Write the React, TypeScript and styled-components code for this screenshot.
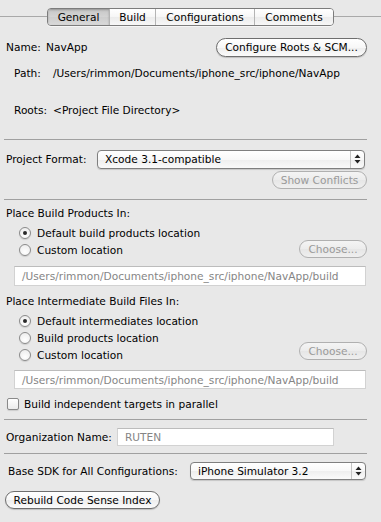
import styled, { createGlobalStyle } from "styled-components";

const Global = createGlobalStyle`
  html, body { margin: 0; padding: 0; background: #e8e8e8; }
  body {
    font-family: "DejaVu Sans", "Liberation Sans", sans-serif;
    font-size: 10.6px;
    color: #000;
  }
  * { box-sizing: border-box; }
`;

const Panel = styled.div`
  width: 381px;
  height: 522px;
  background: #e8e8e8;
  display: flex;
  flex-direction: column;
  overflow: hidden;
`;

const TabBar = styled.div`
  height: 35px;
  padding-top: 8px;
  display: flex;
  align-items: flex-start;
`;

const TabLine = styled.div<{ $w?: number }>`
  ${({ $w }) => ($w ? `width: ${$w}px;` : "flex: 1;")}
  height: 1px;
  margin-top: 8px;
  background: #a9a9a9;
`;

const Segments = styled.div`
  display: flex;
  height: 18px;
  border: 1px solid #7c7c7c;
  border-radius: 4px;
  overflow: hidden;
  box-shadow: 0 1px 0 rgba(255, 255, 255, 0.6);
`;

const Tab = styled.div<{ $w: number; $on?: boolean }>`
  width: ${({ $w }) => $w}px;
  display: flex;
  align-items: center;
  justify-content: center;
  font-size: 10.6px;
  color: #000;
  & + & { border-left: 1px solid #b4b4b4; }
  background: ${({ $on }) =>
    $on
      ? "linear-gradient(#c6c6c6, #d4d4d4 50%, #cdcdcd 51%, #d9d9d9)"
      : "linear-gradient(#ffffff, #f6f6f6 50%, #ececec 51%, #f7f7f7)"};
  box-shadow: ${({ $on }) => ($on ? "inset 0 1px 2px rgba(0,0,0,0.25)" : "none")};
`;

const Row = styled.div<{ $h: number; $mt?: number; $pl?: number; $pr?: number }>`
  height: ${({ $h }) => $h}px;
  margin-top: ${({ $mt }) => $mt ?? 0}px;
  padding-left: ${({ $pl }) => $pl ?? 0}px;
  padding-right: ${({ $pr }) => $pr ?? 0}px;
  display: flex;
  align-items: center;
  white-space: nowrap;
`;

const Label = styled.span<{ $w?: number }>`
  ${({ $w }) => ($w ? `width: ${$w}px; flex: none;` : "")}
  color: #000;
`;

const Spacer = styled.div`
  flex: 1;
`;

const Separator = styled.div<{ $mt: number }>`
  height: 1px;
  margin: ${({ $mt }) => $mt}px 14px 0 4px;
  background: #a0a0a0;
  flex: none;
`;

const Pill = styled.div<{ $w: number; $h?: number; $off?: boolean }>`
  width: ${({ $w }) => $w}px;
  height: ${({ $h }) => $h ?? 19}px;
  flex: none;
  border: 1px solid ${({ $off }) => ($off ? "#b0b0b0" : "#6e6e6e")};
  border-radius: 10px;
  display: flex;
  align-items: center;
  justify-content: center;
  color: ${({ $off }) => ($off ? "#9a9a9a" : "#000")};
  background: ${({ $off }) =>
    $off
      ? "linear-gradient(#f4f4f4, #ececec 50%, #e6e6e6 51%, #efefef)"
      : "linear-gradient(#ffffff, #f7f7f7 50%, #ededed 51%, #fbfbfb)"};
  box-shadow: ${({ $off }) => ($off ? "none" : "0 1px 1px rgba(0,0,0,0.18)")};
`;

const Popup = styled.div<{ $w: number; $h: number }>`
  width: ${({ $w }) => $w}px;
  height: ${({ $h }) => $h}px;
  flex: none;
  border: 1px solid #7f7f7f;
  border-radius: 4px;
  display: flex;
  align-items: stretch;
  background: linear-gradient(#ffffff, #f8f8f8 50%, #eeeeee 51%, #fafafa);
  box-shadow: 0 1px 1px rgba(0, 0, 0, 0.15);
  color: #000;
`;

const PopupText = styled.span`
  flex: 1;
  display: flex;
  align-items: center;
  padding-left: 7px;
`;

const PopupArrows = styled.span`
  width: 14px;
  border-left: 1px solid #c4c4c4;
  display: flex;
  align-items: center;
  justify-content: center;
`;

const Field = styled.div<{ $w?: number; $h: number; $mt?: number; $ml?: number }>`
  ${({ $w }) => ($w ? `width: ${$w}px; flex: none;` : "")}
  height: ${({ $h }) => $h}px;
  margin-top: ${({ $mt }) => $mt ?? 0}px;
  margin-left: ${({ $ml }) => $ml ?? 0}px;
  margin-right: ${({ $w }) => ($w ? 0 : 15)}px;
  background: #ffffff;
  border: 1px solid #d2d2d2;
  border-top-color: #bcbcbc;
  display: flex;
  align-items: center;
  padding-left: 7px;
  color: #858585;
  white-space: nowrap;
  overflow: hidden;
`;

const Group = styled.div<{ $mt: number; $bottom: number }>`
  margin-top: ${({ $mt }) => $mt}px;
  padding: 0 14px 0 19px;
  display: flex;
  align-items: flex-end;
  & > div:last-child { margin-bottom: ${({ $bottom }) => $bottom}px; }
`;

const Options = styled.div`
  flex: 1;
  display: flex;
  flex-direction: column;
`;

const Option = styled.div`
  height: 17px;
  display: flex;
  align-items: center;
  gap: 6px;
  white-space: nowrap;
`;

const Radio = styled.span<{ $on?: boolean }>`
  width: 12px;
  height: 12px;
  flex: none;
  border-radius: 50%;
  border: 1px solid #8a8a8a;
  background: radial-gradient(circle at 50% 70%, #ffffff, #e9e9e9);
  box-shadow: 0 1px 1px rgba(0, 0, 0, 0.12);
  display: flex;
  align-items: center;
  justify-content: center;
  &::after {
    content: "";
    width: 4px;
    height: 4px;
    border-radius: 50%;
    background: ${({ $on }) => ($on ? "#2a2a2a" : "transparent")};
  }
`;

const Check = styled.span`
  width: 12px;
  height: 12px;
  flex: none;
  border-radius: 2px;
  border: 1px solid #8a8a8a;
  background: linear-gradient(#ffffff, #ececec);
  box-shadow: 0 1px 1px rgba(0, 0, 0, 0.12);
  margin-right: 5px;
`;

function Arrows() {
  return (
    <svg width="7" height="10" viewBox="0 0 7 10">
      <path d="M3.5 0.5 L6.5 4 L0.5 4 Z" fill="#222" />
      <path d="M3.5 9.5 L6.5 6 L0.5 6 Z" fill="#222" />
    </svg>
  );
}

const tabs = [
  { name: "General", w: 61 },
  { name: "Build", w: 46 },
  { name: "Configurations", w: 99 },
  { name: "Comments", w: 79 },
];

const buildPath = "/Users/rimmon/Documents/iphone_src/iphone/NavApp/build";

export default function App() {
  return (
    <Panel>
      <Global />
      <TabBar>
        <TabLine $w={47} />
        <Segments>
          {tabs.map((t, i) => (
            <Tab key={t.name} $w={t.w} $on={i === 0}>
              {t.name}
            </Tab>
          ))}
        </Segments>
        <TabLine />
      </TabBar>

      <Row $h={24} $pl={6} $pr={14}>
        <Label $w={40}>Name:</Label>
        <Label>NavApp</Label>
        <Spacer />
        <Pill $w={151}>Configure Roots &amp; SCM...</Pill>
      </Row>
      <Row $h={28} $pl={14}>
        <Label $w={39}>Path:</Label>
        <Label>/Users/rimmon/Documents/iphone_src/iphone/NavApp</Label>
      </Row>
      <Row $h={20} $mt={13} $pl={14}>
        <Label $w={39}>Roots:</Label>
        <Label>&lt;Project File Directory&gt;</Label>
      </Row>

      <Separator $mt={19} />

      <Row $h={20} $mt={9} $pl={6}>
        <Label $w={91}>Project Format:</Label>
        <Popup $w={268} $h={19}>
          <PopupText>Xcode 3.1-compatible</PopupText>
          <PopupArrows>
            <Arrows />
          </PopupArrows>
        </Popup>
      </Row>
      <Row $h={18} $mt={2} $pr={14}>
        <Spacer />
        <Pill $w={95} $h={18} $off>
          Show Conflicts
        </Pill>
      </Row>

      <Separator $mt={10} />

      <Row $h={16} $mt={5} $pl={6}>
        <Label>Place Build Products In:</Label>
      </Row>
      <Group $mt={3} $bottom={0}>
        <Options>
          <Option>
            <Radio $on />
            Default build products location
          </Option>
          <Option>
            <Radio />
            Custom location
          </Option>
        </Options>
        <Pill $w={68} $h={18} $off>
          Choose...
        </Pill>
      </Group>
      <Field $h={20} $mt={8} $ml={14}>
        {buildPath}
      </Field>

      <Row $h={16} $mt={7} $pl={6}>
        <Label>Place Intermediate Build Files In:</Label>
      </Row>
      <Group $mt={3} $bottom={3}>
        <Options>
          <Option>
            <Radio $on />
            Default intermediates location
          </Option>
          <Option>
            <Radio />
            Build products location
          </Option>
          <Option>
            <Radio />
            Custom location
          </Option>
        </Options>
        <Pill $w={68} $h={18} $off>
          Choose...
        </Pill>
      </Group>
      <Field $h={19} $mt={7} $ml={14}>
        {buildPath}
      </Field>

      <Row $h={16} $mt={7} $pl={7}>
        <Check />
        <Label>Build independent targets in parallel</Label>
      </Row>

      <Separator $mt={7} />

      <Row $h={18} $mt={8} $pl={6}>
        <Label $w={111}>Organization Name:</Label>
        <Field $w={217} $h={18}>
          RUTEN
        </Field>
      </Row>

      <Separator $mt={7} />

      <Row $h={18} $mt={8} $pl={8}>
        <Label $w={182}>Base SDK for All Configurations:</Label>
        <Popup $w={176} $h={18}>
          <PopupText>iPhone Simulator 3.2</PopupText>
          <PopupArrows>
            <Arrows />
          </PopupArrows>
        </Popup>
      </Row>

      <Row $h={18} $mt={11} $pl={5}>
        <Pill $w={155} $h={18}>
          Rebuild Code Sense Index
        </Pill>
      </Row>
    </Panel>
  );
}
